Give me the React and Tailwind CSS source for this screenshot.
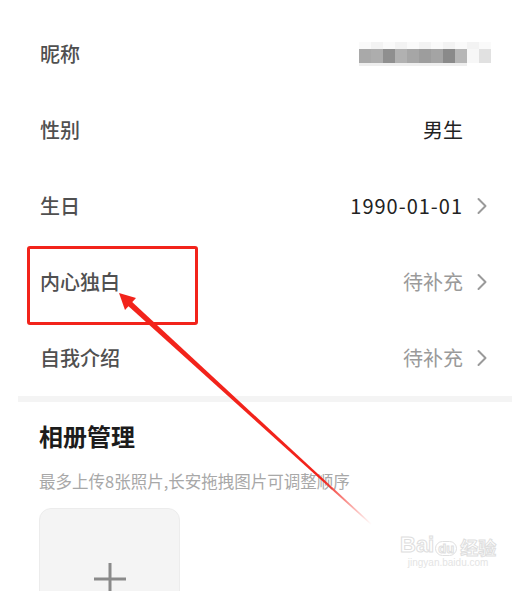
import React from "react";

const blurBlocks = [
  "#a9a9a9",
  "#adadad",
  "#8f8f8f",
  "#b1b1b1",
  "#a6a6a6",
  "#9d9d9d",
  "#a4a4a4",
  "#8a8a8a",
  "#b6b6b6",
  "#f7f7f7",
  "#e1e1e1",
];

function Chevron({ hidden }) {
  return (
    <svg
      width="12"
      height="18"
      viewBox="0 0 12 18"
      className={hidden ? "invisible" : ""}
    >
      <path
        d="M2.5 2 L9.5 9 L2.5 16"
        fill="none"
        stroke="#9a9a9a"
        strokeWidth="2"
        strokeLinecap="round"
        strokeLinejoin="round"
      />
    </svg>
  );
}

function Row({ label, children, arrow = true }) {
  return (
    <div className="h-[76px] flex items-center pl-[40px] pr-[34px]">
      <span className="text-[20px] leading-none font-medium text-[#505050]">{label}</span>
      <div className="ml-auto flex items-center gap-[13px]">
        {children}
        <Chevron hidden={!arrow} />
      </div>
    </div>
  );
}

function NicknameBlur() {
  return (
    <div className="flex flex-col mr-[-28px]">
      <div className="flex h-[7px]">
        {blurBlocks.map((_, i) => (
          <div
            key={i}
            className="w-[12px] h-full"
            style={{ background: i % 2 ? "#f3f3f3" : "#fafafa" }}
          />
        ))}
      </div>
      <div className="flex h-[14px]">
        {blurBlocks.map((c, i) => (
          <div key={i} className="w-[12px] h-full" style={{ background: c }} />
        ))}
      </div>
      <div className="flex h-[3px]">
        {blurBlocks.map((_, i) => (
          <div
            key={i}
            className="w-[12px] h-full"
            style={{ background: i < 9 ? "#eeeeee" : "#ffffff" }}
          />
        ))}
      </div>
    </div>
  );
}

export default function App() {
  return (
    <div
      className="relative w-[522px] h-[591px] overflow-hidden bg-white"
      style={{ fontFamily: '"Noto Sans CJK SC", "Noto Sans", sans-serif' }}
    >
      {/* Profile rows */}
      <div className="pt-[16px]">
        <Row label="昵称" arrow={false}>
          <NicknameBlur />
        </Row>
        <Row label="性别" arrow={false}>
          <span className="text-[20px] leading-none text-[#222]">男生</span>
        </Row>
        <Row label="生日">
          <span className="text-[20px] leading-none tracking-[1px] text-[#222]">1990-01-01</span>
        </Row>
        <Row label="内心独白">
          <span className="text-[20px] leading-none text-[#9a9a9a]">待补充</span>
        </Row>
        <Row label="自我介绍">
          <span className="text-[20px] leading-none text-[#9a9a9a]">待补充</span>
        </Row>
      </div>

      {/* Divider band */}
      <div className="ml-[18px] mr-[10px] h-[6px] bg-[#f4f4f4]" />

      {/* Album */}
      <div className="pl-[39px] pt-[19px]">
        <h2 className="text-[24px] leading-[30px] font-bold text-[#1c1c1c]">相册管理</h2>
        <p className="mt-[20px] text-[16.5px] leading-[20px] text-[#a8a8a8]">
          最多上传8张照片,长安拖拽图片可调整顺序
        </p>
        <div className="mt-[17px] w-[141px] h-[141px] rounded-[12px] bg-[#f4f4f4] border border-[#ececec] flex items-center justify-center">
          <svg width="32" height="32" viewBox="0 0 32 32">
            <path d="M16 0 V32 M0 16 H32" stroke="#8a8a8a" strokeWidth="3" />
          </svg>
        </div>
      </div>

      {/* Annotation box */}
      <div className="absolute left-[27px] top-[246px] w-[171px] h-[79px] border-[3px] border-[#f2231b] rounded-[3px]" />

      {/* Annotation arrow */}
      <svg className="absolute left-0 top-0 pointer-events-none" width="522" height="591">
        <defs>
          <linearGradient id="fade" x1="120" y1="295" x2="372" y2="524" gradientUnits="userSpaceOnUse">
            <stop offset="0" stopColor="#f2231b" />
            <stop offset="0.8" stopColor="#f2231b" />
            <stop offset="1" stopColor="#f2231b" stopOpacity="0" />
          </linearGradient>
        </defs>
        <polygon points="126,304 130,300 372,524 371,525" fill="url(#fade)" />
        <polygon points="119,293 136,298 125,310" fill="#f2231b" />
      </svg>

      {/* Watermark */}
      <div className="absolute left-[400px] top-[534px] flex flex-col items-center text-[#e2e2e2]">
        <div className="flex items-end leading-none">
          <span className="text-[22px] font-bold text-transparent [-webkit-text-stroke:1px_#dedede]" style={{ fontFamily: '"Liberation Sans", sans-serif' }}>
            Bai
          </span>
          <span className="relative mx-[1px] text-[13px] font-bold text-transparent [-webkit-text-stroke:1px_#dedede] border border-[#e0e0e0] rounded-full px-[2px]" style={{ fontFamily: '"Liberation Sans", sans-serif' }}>
            du
          </span>
          <span className="ml-[2px] text-[18px] font-bold text-transparent [-webkit-text-stroke:1px_#dedede]">经验</span>
        </div>
        <span className="text-[10px] leading-[14px] text-[#e4e4e4]" style={{ fontFamily: '"Liberation Sans", sans-serif' }}>
          jingyan.baidu.com
        </span>
      </div>
    </div>
  );
}
